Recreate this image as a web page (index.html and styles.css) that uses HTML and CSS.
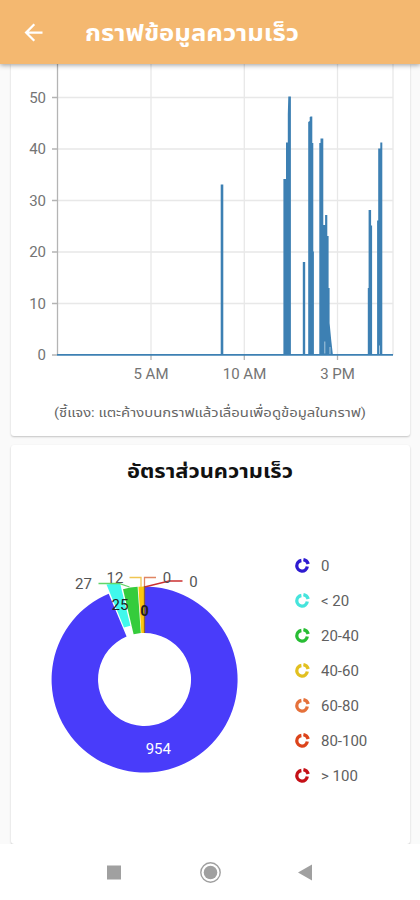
FILE: index.html
```html
<!DOCTYPE html>
<html lang="th">
<head>
    <meta charset="UTF-8">
    <meta name="viewport" content="width=device-width, initial-scale=1.0">
    <title>กราฟข้อมูลความเร็ว</title>
    <link rel="stylesheet" href="styles.css">
</head>
<body>

    <header class="app-bar">
        <svg class="back" viewBox="0 0 24 24" width="27" height="27"><path d="M20 11H7.83l5.59-5.59L12 4l-8 8 8 8 1.41-1.41L7.83 13H20v-2z"/></svg>
        <h1><svg width="216" height="40"><text x="0" y="27" textLength="214" lengthAdjust="spacingAndGlyphs">กราฟข้อมูลความเร็ว</text></svg></h1>
    </header>

    <main>
        <!-- Speed over time -->
        <section class="card line-card">
            <svg class="line-chart" viewBox="0 0 399 320" width="399" height="320">
                <g class="grid">
                    <path d="M47 33.5H382M47 85H382M47 136.5H382M47 188H382M47 239.5H382"/>
                    <path d="M140 0V291M233.3 0V291M326.5 0V291M382 0V291"/>
                </g>
                <path class="axis" d="M46.5 0V291M41 33.5h5M41 85h5M41 136.5h5M41 188h5M41 239.5h5M41 291h5M140 291v5M233.3 291v5M326.5 291v5"/>
                <g class="y-labels">
                    <text x="35" y="38.5">50</text>
                    <text x="35" y="90">40</text>
                    <text x="35" y="141.5">30</text>
                    <text x="35" y="193">20</text>
                    <text x="35" y="244.5">10</text>
                    <text x="35" y="296">0</text>
                </g>
                <g class="x-labels">
                    <text x="140" y="314.5">5 AM</text>
                    <text x="233.5" y="314.5">10 AM</text>
                    <text x="326.5" y="314.5">3 PM</text>
                </g>
                <g class="series">
                    <path d="M46 290h336v1.8H46z"/>
                    <path d="M209.7 120.5h2.6V291h-2.6z"/>
                    <path d="M272.4 115h2.6V78.5h1.8V50l.5-17.5h2.6V291h-7.5z"/>
                    <path d="M291.8 198h2.4v93h-2.4z"/>
                    <path d="M297.2 58l1.5-1v-4l1-.5h1.6V79h1v108.5h.6V291h-5.7z"/>
                    <path d="M308.3 79h1.2v-4.5h2.8V161h1.8v-10h2.2v21h1.3v52h1v35l1.5 16 1.8 16h-13.6z"/>
                    <path d="M357.6 146h2.5v15.5h1V291h-4.3v-67h.8z"/>
                    <path d="M366.1 156.5h1.1v-72h2.1v-6h2V291h-5.2z"/>
                </g>
                <path class="gap" d="M313.8 277.5v12M319 283v7M368.5 281.5v8.5"/>
            </svg>
            <p class="note"><svg width="316" height="28"><text x="2" y="18.5" textLength="312" lengthAdjust="spacingAndGlyphs">(ชี้แจง: แตะค้างบนกราฟแล้วเลื่อนเพื่อดูข้อมูลในกราฟ)</text></svg></p>
        </section>

        <!-- Speed ratio -->
        <section class="card pie-card">
            <h2><svg width="170" height="36"><text x="1" y="25" textLength="166" lengthAdjust="spacingAndGlyphs">อัตราส่วนความเร็ว</text></svg></h2>
            <div class="pie-row">
                <svg class="pie" viewBox="11 555 265 230" width="265" height="230">
                    <path class="s0" d="M144.5 586.5A93 93 0 1 1 108.7 593.7L126.6 636.6A46.5 46.5 0 1 0 144.5 633Z"/>
                    <path class="s1" d="M106.5 584.5L120 583L130.4 625.8L124 627.5Z"/>
                    <path class="s2" d="M123 589.2Q130 587.3 137.6 586.8L140.8 633.1L133.6 634.3Z"/>
                    <path class="s3" d="M138.4 586.8L144.500 586.5V633L141.3 633.1Z"/>
                    <path class="l2" d="M98.5 583.5H119L129.5 587"/>
                    <path class="l3" d="M129.5 577.5H141V587"/>
                    <path class="l4" d="M156 577.5H144.5V587"/>
                    <path class="l6" d="M182.5 581H169L144.5 587"/>
                    <path class="l5" d="M144.5 586V633"/>
                    <text x="83.5" y="589">27</text>
                    <text x="115" y="583">12</text>
                    <text x="167" y="583">0</text>
                    <text x="193.5" y="586.5">0</text>
                    <text class="dark" x="120" y="610">25</text>
                    <text class="dark bold" x="144.5" y="615.5">0</text>
                    <text class="light" x="158.3" y="753.5">954</text>
                </svg>
                <ul class="legend">
                    <li class="c0"><svg viewBox="0 0 15 15"><path d="M6.4 2.5A5.3 5.3 0 1 0 12.3 8.6"/><path d="M8.4 1.6A6.3 6.3 0 0 1 13.2 6"/></svg>0</li>
                    <li class="c1"><svg viewBox="0 0 15 15"><path d="M6.4 2.5A5.3 5.3 0 1 0 12.3 8.6"/><path d="M8.4 1.6A6.3 6.3 0 0 1 13.2 6"/></svg>&lt; 20</li>
                    <li class="c2"><svg viewBox="0 0 15 15"><path d="M6.4 2.5A5.3 5.3 0 1 0 12.3 8.6"/><path d="M8.4 1.6A6.3 6.3 0 0 1 13.2 6"/></svg>20-40</li>
                    <li class="c3"><svg viewBox="0 0 15 15"><path d="M6.4 2.5A5.3 5.3 0 1 0 12.3 8.6"/><path d="M8.4 1.6A6.3 6.3 0 0 1 13.2 6"/></svg>40-60</li>
                    <li class="c4"><svg viewBox="0 0 15 15"><path d="M6.4 2.5A5.3 5.3 0 1 0 12.3 8.6"/><path d="M8.4 1.6A6.3 6.3 0 0 1 13.2 6"/></svg>60-80</li>
                    <li class="c5"><svg viewBox="0 0 15 15"><path d="M6.4 2.5A5.3 5.3 0 1 0 12.3 8.6"/><path d="M8.4 1.6A6.3 6.3 0 0 1 13.2 6"/></svg>80-100</li>
                    <li class="c6"><svg viewBox="0 0 15 15"><path d="M6.4 2.5A5.3 5.3 0 1 0 12.3 8.6"/><path d="M8.4 1.6A6.3 6.3 0 0 1 13.2 6"/></svg>&gt; 100</li>
                </ul>
            </div>
        </section>
    </main>

    <nav class="system-nav">
        <svg viewBox="0 0 420 56" width="420" height="56">
            <rect x="107" y="21.5" width="14" height="14"/>
            <circle cx="210.5" cy="28.5" r="6.8"/>
            <circle class="ring" cx="210.5" cy="28.5" r="9.7"/>
            <path d="M298 28.5L312 20.5V36.5Z"/>
        </svg>
    </nav>

</body>
</html>
```
FILE: styles.css
```css
body {
    margin: 0;
    height: 900px;
    display: flex;
    flex-direction: column;
    overflow: hidden;
    font-family: Roboto, 'Noto Sans', 'Noto Sans Thai', sans-serif;
    background-color: #fafafa;
}

svg {
    display: block;
}

.app-bar {
    height: 64px;
    flex: none;
    display: flex;
    align-items: center;
    box-sizing: border-box;
    padding: 0 20px;
    background-color: #f4b870;
    box-shadow: 0 1px 5px rgba(0, 0, 0, 0.4);
    z-index: 1;
}

.app-bar svg {
    fill: #fff;
}

.app-bar h1 {
    margin: 4px 0 0 38px;
    font-size: 23px;
    font-weight: bold;
}

main {
    flex: 1;
    min-height: 0;
    padding: 0 10px 0 11px;
    display: flex;
    flex-direction: column;
    gap: 9px;
    overflow: hidden;
}

.card {
    flex: none;
    background-color: #fff;
    border-radius: 3px;
    box-shadow: 0 1px 2px rgba(0, 0, 0, 0.22);
}

.line-card {
    height: 372px;
    border-radius: 0 0 3px 3px;
}

.pie-card {
    height: 399px;
}

.line-chart text {
    font-size: 15px;
    fill: #747474;
}

.grid path {
    stroke: #e8e8e8;
    stroke-width: 1.3;
    fill: none;
}

.axis {
    stroke: #b4b4b4;
    stroke-width: 1.3;
    fill: none;
}

.y-labels {
    text-anchor: end;
}

.x-labels {
    text-anchor: middle;
}

.series {
    fill: #3d80b3;
}

.gap {
    stroke: #a8c8df;
}

.note {
    margin: 14px 0 0 41px;
    font-size: 13px;
}

.note svg {
    fill: #666;
}

h2 {
    margin: 0;
    padding: 8px 0 0 115px;
    font-size: 19px;
    font-weight: bold;
}

h2 svg {
    fill: #111;
}

.pie-row {
    display: flex;
    margin-top: 66px;
}

.pie text {
    font-size: 15px;
    text-anchor: middle;
    fill: #555;
}

.pie .dark {
    fill: #222;
}

.pie .bold {
    font-weight: bold;
}

.pie .light {
    fill: #fff;
}

.s0 { fill: #493cfa; }
.s1 { fill: #40f8ec; }
.s2 { fill: #35cc3c; }
.s3 { fill: #fcc70c; }

.l2, .l3, .l4, .l5, .l6 {
    fill: none;
    stroke-width: 1.3;
}

.l2 { stroke: #62d668; }
.l3 { stroke: #f0c552; }
.l4 { stroke: #e08562; }
.l5 { stroke: #8c6030; }
.l6 { stroke: #cc3030; }

.legend {
    list-style: none;
    margin: -7px 0 0 19px;
    padding: 0;
}

.legend li {
    display: flex;
    align-items: center;
    gap: 11px;
    height: 35px;
    font-size: 15px;
    color: #606060;
}

.legend svg {
    width: 15px;
    height: 15px;
    fill: none;
    stroke-width: 3.3;
}

.c0 path { stroke: #2e1bd0; }
.c1 path { stroke: #46e4dc; }
.c2 path { stroke: #28bd34; }
.c3 path { stroke: #e2c020; }
.c4 path { stroke: #e5713b; }
.c5 path { stroke: #dc441b; }
.c6 path { stroke: #c51017; }

.system-nav {
    flex: none;
    height: 56px;
    background-color: #fff;
}

.system-nav svg {
    fill: #a0a0a0;
}

.system-nav .ring {
    fill: none;
    stroke: #a0a0a0;
    stroke-width: 1.4;
}
```
